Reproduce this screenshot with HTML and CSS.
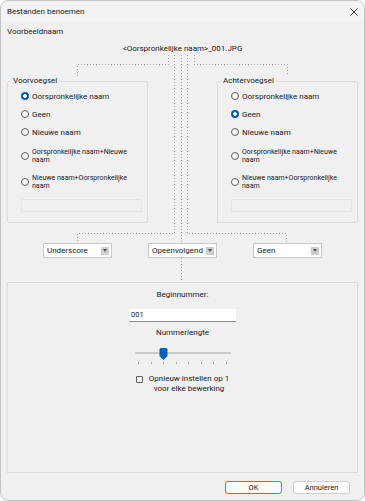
FILE: index.html
```html
<!DOCTYPE html>
<html lang="nl">
<head>
  <meta charset="UTF-8">
  <title>Bestanden benoemen</title>
  <link rel="stylesheet" href="styles.css">
</head>
<body>

  <div class="window">
    <div class="titlebar">
      <span>Bestanden benoemen</span>
      <svg class="close" width="8" height="8" viewBox="0 0 8 8">
        <path d="M0.5 0.5L7.5 7.5M7.5 0.5L0.5 7.5" stroke="#2b2b2b" stroke-width="0.9" fill="none"/>
      </svg>
    </div>

    <div class="content">
      <div class="sample-label">Voorbeeldnaam</div>
      <div class="sample-name">&lt;Oorspronkelijke naam&gt;_001.JPG</div>

      <div class="groups">
        <fieldset class="group">
          <legend>Voorvoegsel</legend>
          <label class="radio"><span class="dot on"></span>Oorspronkelijke naam</label>
          <label class="radio"><span class="dot"></span>Geen</label>
          <label class="radio"><span class="dot"></span>Nieuwe naam</label>
          <label class="radio two"><span class="dot"></span><span>Oorspronkelijke naam+Nieuwe<br>naam</span></label>
          <label class="radio two"><span class="dot"></span><span>Nieuwe naam+Oorspronkelijke<br>naam</span></label>
          <div class="field"></div>
        </fieldset>

        <fieldset class="group">
          <legend>Achtervoegsel</legend>
          <label class="radio"><span class="dot"></span>Oorspronkelijke naam</label>
          <label class="radio"><span class="dot on"></span>Geen</label>
          <label class="radio"><span class="dot"></span>Nieuwe naam</label>
          <label class="radio two"><span class="dot"></span><span>Oorspronkelijke naam+Nieuwe<br>naam</span></label>
          <label class="radio two"><span class="dot"></span><span>Nieuwe naam+Oorspronkelijke<br>naam</span></label>
          <div class="field"></div>
        </fieldset>
      </div>

      <div class="selects">
        <div class="select"><span>Underscore</span><span class="arrow"></span></div>
        <div class="select"><span>Opeenvolgend</span><span class="arrow"></span></div>
        <div class="select"><span>Geen</span><span class="arrow"></span></div>
      </div>

      <div class="panel">
        <div class="caption">Beginnummer:</div>
        <div class="input">001</div>
        <div class="caption">Nummerlengte</div>
        <svg class="slider" width="98" height="18" viewBox="0 0 98 18">
          <rect x="1" y="6" width="96" height="2" rx="1" fill="#cacaca"/>
          <path d="M25.5 3.5Q25.5 2 27 2H32Q33.5 2 33.5 3.5V10L29.5 14L25.5 10Z" fill="#005fb8"/>
          <g fill="#a8a8a8">
            <rect x="4" y="16" width="1" height="2"/>
            <rect x="17" y="16" width="1" height="2"/>
            <rect x="29" y="16" width="1" height="2"/>
            <rect x="42" y="16" width="1" height="2"/>
            <rect x="54" y="16" width="1" height="2"/>
            <rect x="67" y="16" width="1" height="2"/>
            <rect x="79" y="16" width="1" height="2"/>
            <rect x="92" y="16" width="1" height="2"/>
          </g>
        </svg>
        <label class="check">
          <span class="box"></span>
          <span class="check-text">Opnieuw instellen op 1<br>voor elke bewerking</span>
        </label>
      </div>

      <div class="buttons">
        <button class="btn default">OK</button>
        <button class="btn">Annuleren</button>
      </div>
    </div>

    <!-- stippellijnen tussen voorbeeldnaam, groepen en keuzelijsten -->
    <svg class="links" width="363" height="499" viewBox="1 1 363 499">
      <g stroke="#a2a2a2" stroke-width="1" stroke-dasharray="1 2" fill="none">
        <path d="M168.5 55V64.5H77.5V76"/>
        <path d="M174.5 55V233.5H77.5V243"/>
        <path d="M181.5 55V243"/>
        <path d="M187.5 55V233.5H286.5V243"/>
        <path d="M194.5 55V64.5H287.5V76"/>
        <path d="M181.5 258V282"/>
      </g>
    </svg>
  </div>

</body>
</html>
```

FILE: styles.css
```css
* {
  box-sizing: border-box;
}

body {
  margin: 0;
  background-color: #ffffff;
  font-family: Roboto, 'Noto Sans', sans-serif;
  font-size: 8px;
  color: #202020;
}

.window {
  position: relative;
  width: 365px;
  height: 501px;
  border: 1px solid #c4c4c4;
  border-radius: 8px;
  background-color: #f0f0f0;
  overflow: hidden;
  display: flex;
  flex-direction: column;
}

.titlebar {
  height: 21px;
  display: flex;
  align-items: center;
  justify-content: space-between;
  padding: 0 6px;
  background-color: #f3f3f3;
}

.content {
  flex: 1;
  display: flex;
  flex-direction: column;
  padding: 0 6px;
}

.sample-label {
  margin-top: 4px;
  line-height: 12px;
}

.sample-name {
  margin-top: 5px;
  line-height: 12px;
  text-align: center;
}

.groups {
  margin-top: 21px;
  display: flex;
  justify-content: space-between;
}

.group {
  width: 141px;
  min-width: 0;
  margin: 0;
  padding: 1px 5px 10px 13px;
  border: 1px solid #dcdcdc;
  border-radius: 2px;
  display: flex;
  flex-direction: column;
}

legend {
  padding: 0 2px;
  margin-left: -10px;
  line-height: 10px;
}

.radio {
  display: flex;
  align-items: center;
  gap: 3px;
  height: 18px;
}

.radio.two {
  height: 22px;
  margin-top: 4px;
  font-size: 7px;
  line-height: 8px;
}

.dot {
  flex: none;
  width: 8px;
  height: 8px;
  border: 1px solid #5f5f5f;
  border-radius: 50%;
  background-color: #f8f8f8;
}

.dot.on {
  border: none;
  background: radial-gradient(circle closest-side, #ffffff 42%, #005fb8 50%);
}

.field {
  margin-top: 6px;
  height: 13px;
  border: 1px solid #e4e4e4;
  border-radius: 2px;
}

.selects {
  margin-top: 20px;
  display: grid;
  grid-template-columns: 141px 1fr 141px;
  justify-items: center;
}

.select {
  width: 69px;
  height: 15px;
  display: flex;
  align-items: center;
  justify-content: space-between;
  padding: 0 2px 0 3px;
  background-color: #ffffff;
  border: 1px solid #c8c8c8;
}

.arrow {
  width: 8px;
  height: 8px;
  display: flex;
  align-items: center;
  justify-content: center;
  background-color: #cdcdcd;
}

.arrow::after {
  content: '';
  border-left: 2.5px solid transparent;
  border-right: 2.5px solid transparent;
  border-top: 3px solid #555555;
}

.panel {
  margin-top: 24px;
  height: 191px;
  display: flex;
  flex-direction: column;
  align-items: center;
  padding-top: 6px;
  border: 1px solid #dcdcdc;
}

.caption {
  line-height: 12px;
}

.input {
  margin-top: 8px;
  width: 107px;
  height: 13px;
  padding-left: 2px;
  line-height: 12px;
  font-size: 7.5px;
  background-color: #ffffff;
  border-bottom: 1px solid #8c8c8c;
}

.panel .caption + .slider {
  margin-top: 7px;
}

.caption + .input + .caption {
  margin-top: 5px;
}

.check {
  margin-top: 10px;
  display: flex;
  align-items: flex-start;
  gap: 6px;
}

.box {
  flex: none;
  width: 7px;
  height: 7px;
  margin-top: 2px;
  border: 1px solid #5f5f5f;
  border-radius: 1px;
  background-color: #f8f8f8;
}

.check-text {
  text-align: center;
  line-height: 10px;
}

.buttons {
  margin-top: 8px;
  display: flex;
  justify-content: flex-end;
  gap: 11px;
  padding-right: 8px;
}

.btn {
  width: 57px;
  height: 13px;
  padding: 0;
  font-family: inherit;
  font-size: 7.5px;
  color: #1b1b1b;
  background-color: #fdfdfd;
  border: 1px solid #d0d0d0;
  border-radius: 3px;
}

.btn.default {
  border-color: #3f88d2;
}

.links {
  position: absolute;
  left: 0;
  top: 0;
  pointer-events: none;
}
```
